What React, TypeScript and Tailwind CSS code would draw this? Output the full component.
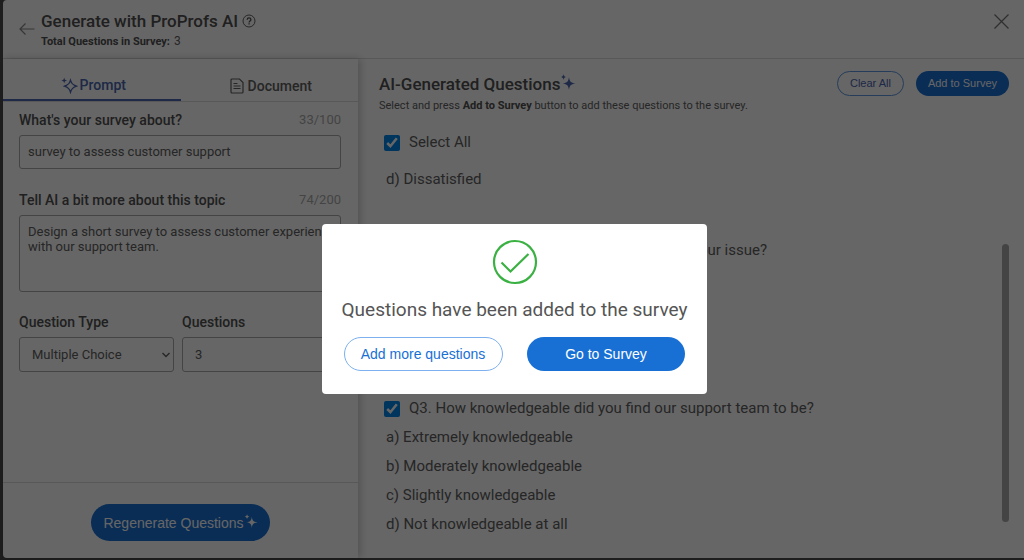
import type { ReactNode } from "react";

const questions = [
  {
    id: "q2",
    title: "Q2. How promptly were we able to resolve your issue?",
    options: ["a) Very quickly", "b) Somewhat quickly", "c) Not quickly"],
  },
  {
    id: "q3",
    title: "Q3. How knowledgeable did you find our support team to be?",
    options: [
      "a) Extremely knowledgeable",
      "b) Moderately knowledgeable",
      "c) Slightly knowledgeable",
      "d) Not knowledgeable at all",
    ],
  },
];

function Sparkles({ className }: { className?: string }) {
  return (
    <svg viewBox="0 0 16 18" fill="currentColor" className={className} aria-hidden="true">
      <path d="M9 4c.6 4.400 1.600 5.800 6.500 6.500C10.600 11.200 9.600 12.600 9 17c-.6-4.400-1.600-5.800-6.500-6.500C7.400 9.800 8.400 8.400 9 4z" />
      <path d="M3.500 1c.3 2 .8 2.600 2.800 3-2 .4-2.500 1-2.800 3-.3-2-.8-2.600-2.800-3 2-.4 2.500-1 2.800-3z" />
    </svg>
  );
}

function FieldLabel({ htmlFor, count, children }: { htmlFor: string; count?: string; children: ReactNode }) {
  return (
    <div className="flex items-center justify-between h-5 mb-[5px]">
      <label htmlFor={htmlFor} className="text-sm font-medium text-[#505050]">
        {children}
      </label>
      {count && <span className="text-[13px] text-[#aaa]">{count}</span>}
    </div>
  );
}

function SelectField({ id, label, value }: { id: string; label: string; value: string }) {
  return (
    <div>
      <FieldLabel htmlFor={id}>{label}</FieldLabel>
      <div className="relative">
        <select
          id={id}
          className="w-full h-[35px] appearance-none rounded-[3px] border border-[#aaa] px-3 text-[13px] text-[#606060]"
        >
          <option>{value}</option>
        </select>
        <svg
          viewBox="0 0 8 6"
          className="pointer-events-none absolute right-1 top-[15px] w-2 h-[6px] text-[#606060]"
          fill="none"
          stroke="currentColor"
          strokeWidth="1.400"
        >
          <path d="M.5 1L4 4.500 7.500 1" />
        </svg>
      </div>
    </div>
  );
}

function Header() {
  return (
    <header className="flex items-start h-[59px] border-b border-[#dcdcdc] pl-4 pr-[15px]">
      <button aria-label="Back" className="mt-[22px] text-[#888]">
        <svg viewBox="0 0 16 14" className="w-4 h-[14px]" fill="none" stroke="currentColor" strokeWidth="1.200">
          <path d="M15.500 7H1M6.500 1.500L1 7l5.500 5.500" />
        </svg>
      </button>
      <div className="ml-[6px] mt-[10px] flex-1">
        <h1 className="flex items-center gap-1 text-[17px] leading-[22px] font-medium text-[#505050]">
          Generate with ProProfs AI
          <svg viewBox="0 0 14 14" className="w-[14px] h-[14px]" fill="none" stroke="currentColor">
            <circle cx="7" cy="7" r="6" strokeWidth=".9" />
            <path d="M5.200 5.700c0-2.400 3.700-2.400 3.700 0C8.900 7 7.100 7 7.100 8.400M7.100 9.300v1.200" strokeWidth="1.300" />
          </svg>
        </h1>
        <p className="text-[11px] leading-5 text-[#606060]">
          <b className="font-bold text-[#505050]">Total Questions in Survey:</b>
          <span className="ml-1 text-xs">3</span>
        </p>
      </div>
      <button aria-label="Close" className="mt-[14px] text-[#777]">
        <svg viewBox="0 0 15 15" className="w-[15px] h-[15px]" fill="none" stroke="currentColor" strokeWidth="1.300">
          <path d="M.5.5l14 14M14.500.5l-14 14" />
        </svg>
      </button>
    </header>
  );
}

function PromptPanel() {
  return (
    <section className="flex flex-col w-[355px] shrink-0 shadow-[2px_0_8px_rgba(0,0,0,0.22)]">
      <div role="tablist" className="flex h-[43px] border-b border-[#dcdcdc] text-sm font-medium">
        <button
          role="tab"
          aria-selected="true"
          className="flex flex-1 items-center justify-center gap-[2px] pt-3 pl-[3px] border-b-2 border-[#4a66b0] text-[#4a66b0]"
        >
          <svg viewBox="0 0 17 17" className="w-[17px] h-[17px]" fill="none" stroke="currentColor" strokeWidth="1.300">
            <path d="M9.500 3.200c1 3.400 2 4.500 6 6-4 1.500-5 2.600-6 6-1-3.400-2-4.500-6-6 4-1.500 5-2.600 6-6z" />
            <path d="M3.200.7l.8 2 2 .8-2 .8-.8 2-.8-2-2-.8 2-.8z" fill="currentColor" stroke="none" />
          </svg>
          Prompt
        </button>
        <button role="tab" aria-selected="false" className="flex flex-1 items-center justify-center gap-1 pt-3 pl-[3px] text-[#606060]">
          <svg viewBox="0 0 14 16" className="w-[14px] h-4" fill="none" stroke="currentColor" strokeWidth="1.200">
            <path d="M1 2a1 1 0 011-1h7.500L13 4.500V14a1 1 0 01-1 1H2a1 1 0 01-1-1zM3.500 5.500h4M3.500 8h7M3.500 10.500h7" />
          </svg>
          Document
        </button>
      </div>

      <form className="flex-1 pl-4 pr-[17px] pt-2">
        <FieldLabel htmlFor="topic" count="33/100">
          What's your survey about?
        </FieldLabel>
        <input
          id="topic"
          defaultValue="survey to assess customer support"
          className="block w-full h-[34px] rounded-[3px] border border-[#aaa] px-2 pb-[2px] text-[13px] text-[#606060]"
        />

        <div className="mt-[21px]">
          <FieldLabel htmlFor="details" count="74/200">
            Tell AI a bit more about this topic
          </FieldLabel>
          <textarea
            id="details"
            defaultValue="Design a short survey to assess customer experience with our support team."
            className="block w-full h-[77px] resize-none rounded-[3px] border border-[#aaa] py-2 pl-2 pr-1 text-[13px] leading-[15px] text-[#606060]"
          />
        </div>

        <div className="mt-5 grid grid-cols-[155px_1fr] gap-2">
          <SelectField id="type" label="Question Type" value="Multiple Choice" />
          <SelectField id="count" label="Questions" value="3" />
        </div>
      </form>

      <div className="flex items-center justify-center h-[76px] border-t border-[#dcdcdc] pt-1">
        <button className="flex items-center h-[37px] rounded-full bg-[#1870d5] px-3 font-['Liberation_Sans',sans-serif] text-sm text-white">
          Regenerate Questions
          <Sparkles className="w-[14px] h-4 mb-1" />
        </button>
      </div>
    </section>
  );
}

function ResultsPanel() {
  return (
    <section className="flex flex-1 min-w-0 flex-col pl-[21px] pr-[15px]">
      <div className="flex items-start justify-between pt-3">
        <div>
          <h2 className="flex items-center text-[17px] leading-[26px] font-medium text-[#505050]">
            AI-Generated Questions
            <Sparkles className="w-4 h-[18px] mb-1 text-[#4a66b0]" />
          </h2>
          <p className="text-[11px] leading-[17px] text-[#606060]">
            Select and press <b className="text-[#505050]">Add to Survey</b> button to add these questions to the survey.
          </p>
        </div>
        <div className="flex gap-3 font-['Liberation_Sans',sans-serif] text-[11px]">
          <button className="h-[25px] rounded-full border border-[#5c98e0] px-3 text-[#4a66b0]">Clear All</button>
          <button className="h-[25px] rounded-full bg-[#1870d5] px-3 text-white">Add to Survey</button>
        </div>
      </div>

      <div className="flex flex-1 justify-between pt-[14px] text-[15px] leading-[29px] text-[#606060]">
        <div className="pl-[5px]">
          <div className="flex items-center gap-[9px]">
            <input id="all" type="checkbox" defaultChecked className="w-4 h-4 accent-[#0084e8]" />
            <label htmlFor="all">Select All</label>
          </div>
          <p className="mt-2 pl-[2px]">d) Dissatisfied</p>
          {questions.map((q) => (
            <div key={q.id} className="mt-[42px]">
              <div className="flex items-center gap-[9px]">
                <input id={q.id} type="checkbox" defaultChecked className="w-4 h-4 accent-[#0084e8]" />
                <label htmlFor={q.id}>{q.title}</label>
              </div>
              <ul className="pl-[2px]">
                {q.options.map((option) => (
                  <li key={option}>{option}</li>
                ))}
              </ul>
            </div>
          ))}
        </div>
        <div className="mt-[116px] mb-9 w-[7px] rounded-sm bg-[#aaa]" />
      </div>
    </section>
  );
}

function AddedDialog() {
  return (
    <div className="fixed inset-0 flex items-center justify-center bg-black/60 pt-[58px] pl-[5px]">
      <div role="dialog" aria-modal="true" className="flex flex-col items-center rounded-[4px] bg-white px-5 pt-[15px] pb-[23px]">
        <svg viewBox="0 0 46 46" className="w-[46px] h-[46px]" fill="none" stroke="#3bb143">
          <circle cx="23" cy="23" r="21" strokeWidth="2.200" />
          <path d="M9.500 23.500l9 9L36.500 15" strokeWidth="2.200" />
        </svg>
        <p className="mt-3 text-[19px] leading-[26px] text-[#555]">Questions have been added to the survey</p>
        <div className="mt-[14px] grid w-full grid-cols-2 gap-6 px-[2px] font-['Liberation_Sans',sans-serif] text-sm">
          <button className="h-[34px] rounded-full border border-[#7db0ee] text-[#1870d5]">Add more questions</button>
          <button className="h-[34px] rounded-full bg-[#1870d5] text-white">Go to Survey</button>
        </div>
      </div>
    </div>
  );
}

export default function App() {
  return (
    <div className="flex min-h-screen bg-[#4d4d4d] pl-[3px] pb-[2px] font-[Roboto,sans-serif]">
      <main className="flex flex-1 flex-col rounded-l bg-white">
        <Header />
        <div className="flex flex-1">
          <PromptPanel />
          <ResultsPanel />
        </div>
      </main>
      <AddedDialog />
    </div>
  );
}
